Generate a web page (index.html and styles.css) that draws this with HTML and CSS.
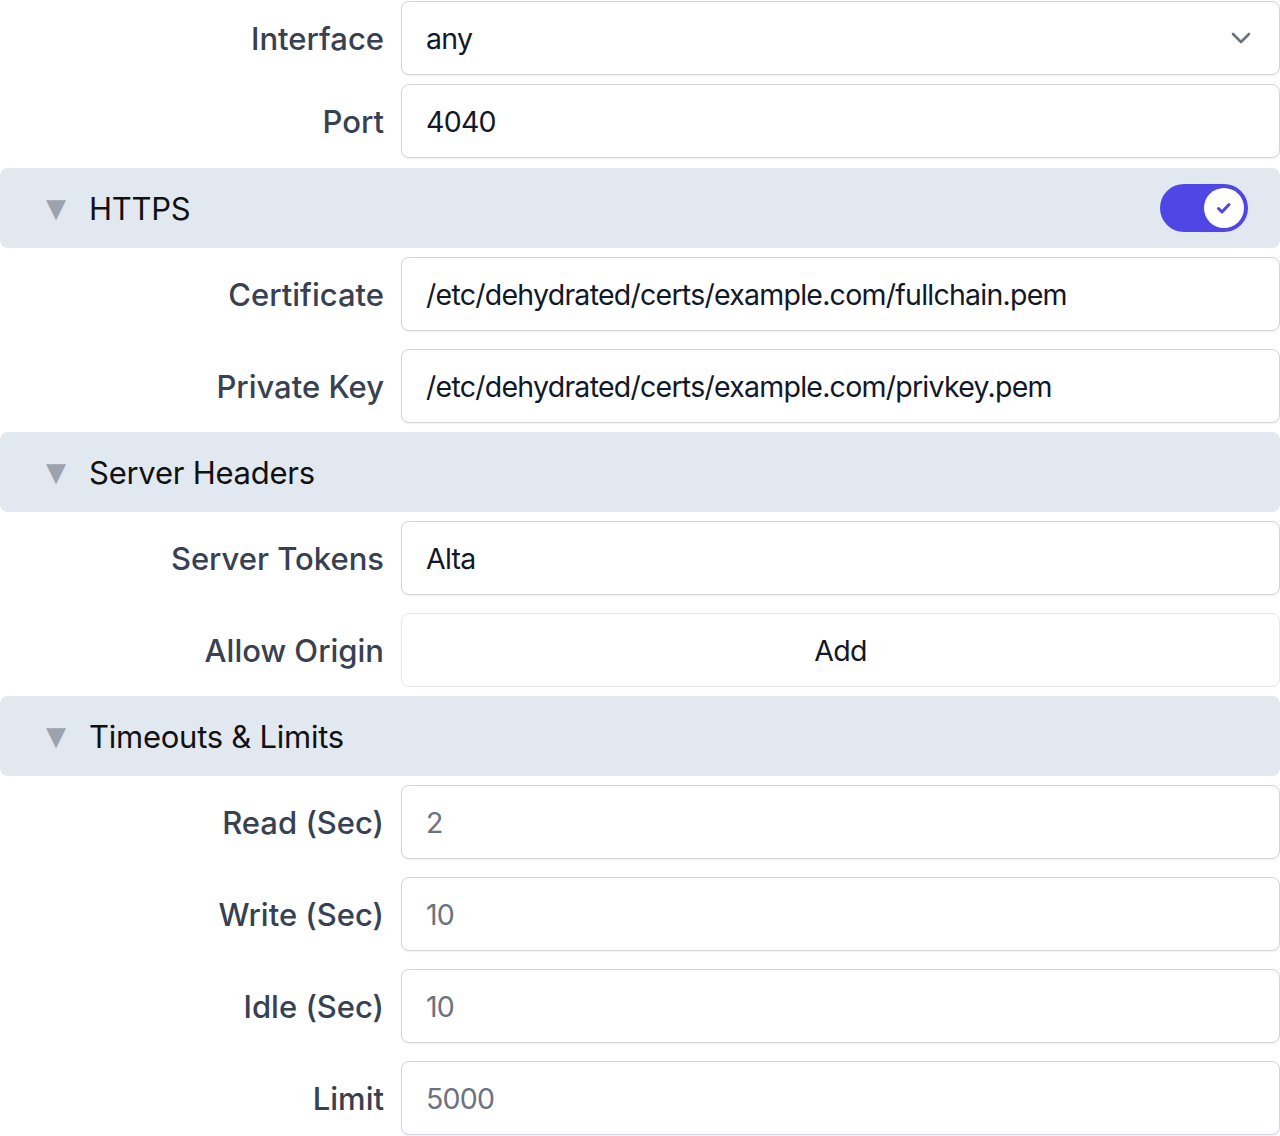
FILE: index.html
```html
<!DOCTYPE html>
<html>
<head>
<meta charset="utf-8">
<link rel="stylesheet" href="styles.css">
</head>
<body>
<div class="form">
  <div class="group top">
    <div class="row">
      <label class="label">Interface</label>
      <div class="field select">
        <span class="value">any</span>
        <svg class="chevron" width="24" height="24" viewBox="0 0 24 24"><path d="M4 8l8 8 8-8" fill="none" stroke="#6b7280" stroke-width="2.6" stroke-linecap="round" stroke-linejoin="round"/></svg>
      </div>
    </div>
    <div class="row">
      <label class="label">Port</label>
      <div class="field"><span class="value">4040</span></div>
    </div>
  </div>

  <div class="section">
    <div class="summary">
      <span class="marker">▼</span>
      <span class="title">HTTPS</span>
      <span class="toggle"><span class="knob"><svg width="20" height="20" viewBox="0 0 20 20"><path d="M4.5 10.5l3.5 3.5 7-7.5" fill="none" stroke="#4f46e5" stroke-width="3" stroke-linecap="round" stroke-linejoin="round"/></svg></span></span>
    </div>
    <div class="group">
      <div class="row">
        <label class="label">Certificate</label>
        <div class="field"><span class="value">/etc/dehydrated/certs/example.com/fullchain.pem</span></div>
      </div>
      <div class="row">
        <label class="label">Private Key</label>
        <div class="field"><span class="value">/etc/dehydrated/certs/example.com/privkey.pem</span></div>
      </div>
    </div>
  </div>

  <div class="section">
    <div class="summary">
      <span class="marker">▼</span>
      <span class="title">Server Headers</span>
    </div>
    <div class="group">
      <div class="row">
        <label class="label">Server Tokens</label>
        <div class="field"><span class="value">Alta</span></div>
      </div>
      <div class="row">
        <label class="label">Allow Origin</label>
        <div class="field button"><span class="value">Add</span></div>
      </div>
    </div>
  </div>

  <div class="section">
    <div class="summary">
      <span class="marker">▼</span>
      <span class="title">Timeouts &amp; Limits</span>
    </div>
    <div class="group">
      <div class="row">
        <label class="label">Read (Sec)</label>
        <div class="field"><span class="value placeholder">2</span></div>
      </div>
      <div class="row">
        <label class="label">Write (Sec)</label>
        <div class="field"><span class="value placeholder">10</span></div>
      </div>
      <div class="row">
        <label class="label">Idle (Sec)</label>
        <div class="field"><span class="value placeholder">10</span></div>
      </div>
      <div class="row">
        <label class="label">Limit</label>
        <div class="field"><span class="value placeholder">5000</span></div>
      </div>
    </div>
  </div>
</div>
</body>
</html>
```

FILE: styles.css
```css
* { box-sizing: border-box; }
html, body { margin: 0; padding: 0; background: #ffffff; }
body {
  font-family: Inter, "Noto Sans", "Liberation Sans", sans-serif;
  color: #111827;
  width: 1280px;
  height: 1136px;
  overflow: hidden;
}
.form { display: flex; flex-direction: column; }
.group {
  display: flex;
  flex-direction: column;
  gap: 18px;
  padding: 9px 0;
}
.group.top { gap: 9px; padding: 1px 0 10px; }
.row {
  display: grid;
  grid-template-columns: 384px 1fr;
  column-gap: 17px;
  align-items: center;
}
.label {
  text-align: right;
  font-size: 31px;
  font-weight: 500;
  color: #374151;
}
.field {
  height: 74px;
  border: 1px solid #d1d5db;
  border-radius: 8px;
  background: #fff;
  box-shadow: 0 1px 2px rgba(0,0,0,0.06);
  display: flex;
  align-items: center;
  padding: 0 24px;
  font-size: 28.5px;
  letter-spacing: -0.75px;
  color: #111827;
}
.select { justify-content: space-between; padding-right: 26px; }
.chevron { display: block; }
.placeholder { color: #6b7280; }
.button {
  justify-content: center;
  border-color: #e5e7eb;
  box-shadow: none;
}
.summary {
  height: 80px;
  background: #e2e8f0;
  border-radius: 8px;
  display: flex;
  align-items: center;
  padding: 0 32px 0 46px;
}
.marker {
  color: #9ca3af;
  font-size: 26px;
  width: 43px;
  font-family: "DejaVu Sans", sans-serif;
}
.title {
  font-size: 31px;
  color: #111;
  flex: 1;
  letter-spacing: -0.25px;
}
.toggle {
  width: 88px;
  height: 48px;
  border-radius: 24px;
  background: #4f46e5;
  display: flex;
  align-items: center;
  justify-content: flex-end;
  padding: 4px;
}
.knob {
  width: 40px;
  height: 40px;
  border-radius: 50%;
  background: #fff;
  display: flex;
  align-items: center;
  justify-content: center;
}
```
